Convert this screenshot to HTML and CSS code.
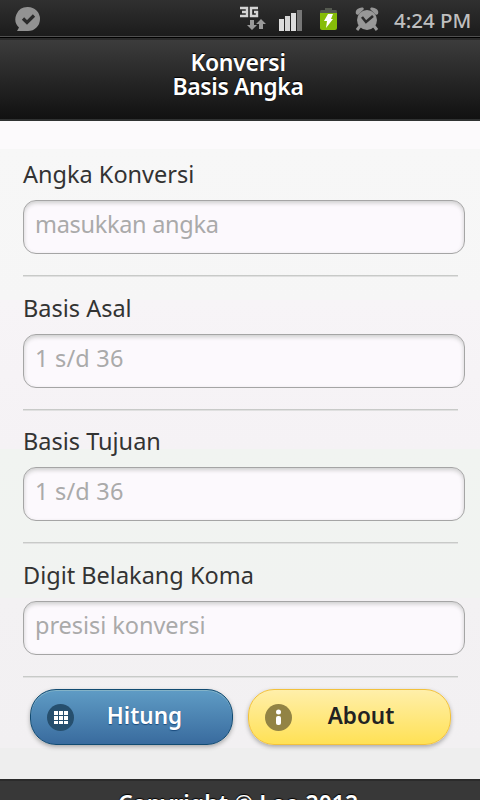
FILE: index.html
```html
<!DOCTYPE html>
<html lang="id">
<head>
<meta charset="utf-8">
<title>Konversi Basis Angka</title>
<link rel="stylesheet" href="styles.css">
</head>
<body>
<div class="status">
  <svg class="chat" width="26" height="26" viewBox="0 0 26 26"><path d="M13 1a12 12 0 1 1 0 24H2l2-3.500A12 12 0 0 1 13 1z" fill="#929292"/><path d="M8 12.500l4 4 7-7" fill="none" stroke="#2b2b2b" stroke-width="3.200"/></svg>
  <svg class="network" width="26" height="24" viewBox="0 0 26 24"><g fill="none" stroke="#d4d4d4" stroke-width="2.400"><path d="M0 2h7v8H0M2 6h5M18 2h-7v8h6V6h-3"/></g><g fill="#999"><path d="M10 14h4v5h3l-5 5-5-5h3zM19 23h4v-5h3l-5-5-5 5h3z"/></g></svg>
  <svg class="signal" width="24" height="22" viewBox="0 0 24 22"><path d="M0 10h5v12H0z" fill="#ddd"/><path d="M6 7h5v15H6z" fill="#d6d6d6"/><path d="M12 4h5v18h-5z" fill="#ddd"/><path d="M18 1h5v21h-5z" fill="#777"/></svg>
  <svg class="battery" width="18" height="24" viewBox="0 0 18 24"><path d="M5 1h7v2h4q1 0 1 2v2H0V5q0-2 1-2h4z" fill="#555a50"/><path d="M0 6h17v15q0 2-2 2H2q-2 0-2-2z" fill="#86bd08"/><path d="M8 7h5l-2 5h2l-7 9 1-7H4z" fill="#fff"/></svg>
  <svg class="alarm" width="24" height="26" viewBox="0 0 24 26"><g fill="#969696"><path d="M1 8Q0 5 2.500 3T8 1.500L9 3 3 9zM23 8q1-3-1.500-5T16 1.500L15 3l6 6z"/></g><path d="M5 20l-3 4M19 20l3 4" stroke="#969696" stroke-width="3"/><circle cx="12" cy="14" r="10" fill="#989898"/><path d="M7 11l4 5 7-6" fill="none" stroke="#2b2b2b" stroke-width="2.600"/></svg>
  <span class="time">4:24 PM</span>
</div>
<header class="header"><h1><span class="t1">Konversi</span><span class="t2">Basis Angka</span></h1></header>
<main class="content">
  <div class="field"><label class="l1" for="angka">Angka Konversi</label><input class="p1" id="angka" placeholder="masukkan angka"></div>
  <div class="field"><label class="l2" for="asal">Basis Asal</label><input class="p2" id="asal" placeholder="1 s/d 36"></div>
  <div class="field"><label class="l3" for="tujuan">Basis Tujuan</label><input class="p2" id="tujuan" placeholder="1 s/d 36"></div>
  <div class="field"><label class="l4" for="digit">Digit Belakang Koma</label><input class="p4" id="digit" placeholder="presisi konversi"></div>
  <div class="actions">
    <button class="btn blue"><svg width="27" height="27" viewBox="0 0 27 27"><circle cx="13.500" cy="13.500" r="13.500" fill="#264f6e"/><path d="M7 7h4v4H7zM12 7h4v4h-4zM17 7h4v4h-4zM7 12h4v4H7zM12 12h4v4h-4zM17 12h4v4h-4zM7 17h4v3H7zM12 17h4v3h-4zM17 17h4v3h-4z" fill="#fff"/></svg><span>Hitung</span></button>
    <button class="btn yellow"><svg width="27" height="27" viewBox="0 0 27 27"><circle cx="13.500" cy="13.500" r="13.500" fill="#928344"/><circle cx="13.500" cy="8" r="2.500" fill="#fff"/><rect x="11" y="12" width="5" height="9" rx="2" fill="#fff"/></svg><span>About</span></button>
  </div>
</main>
<footer class="footer">Copyright © Leo 2012</footer>
</body>
</html>
```
FILE: styles.css
```css
*, *::after { box-sizing: border-box; }
html { overflow: hidden; }
body {
  margin: 0;
  height: 800px;
  overflow: hidden;
  display: flex;
  flex-direction: column;
  font-family: "Noto Sans", "Open Sans", sans-serif;
  color: #333;
  background: #eee;
}
.status {
  height: 38px;
  flex: none;
  display: flex;
  align-items: flex-start;
  padding: 6px 0 0 15px;
  background: linear-gradient(#303030, #1b1b1b);
  border-bottom: 1px solid #000;
  box-shadow: inset 0 -1px #505050;
}
.status svg { flex: none; }
.network { margin-left: 199px; }
.signal { margin: 3px 0 0 13px; }
.battery { margin: 1px 0 0 17px; }
.alarm { margin-left: 17px; }
.time {
  margin-left: 15px;
  font-size: 20.500px;
  line-height: 28px;
  font-weight: 500;
  letter-spacing: 0;
  color: #bfbfbf;
  white-space: nowrap;
}
.header {
  height: 83px;
  flex: none;
  padding-top: 10px;
  text-align: center;
  color: #fff;
  background: linear-gradient(#3c3c3c, #111);
  border-top: 2px solid #2a2a2a;
  border-bottom: 2px solid #303232;
}
.header h1 {
  margin: 0;
  padding-right: 4px;
  font-size: 23px;
  line-height: 24px;
  font-weight: 600;
  text-shadow: 0 -1px 1px #000;
}
.t1, .t2 { display: block; }
.t1 { letter-spacing: -0.300px; }
.t2 { letter-spacing: -0.400px; }
.content {
  height: 658px;
  flex: none;
  padding: 38px 15px 0 23px;
  background: linear-gradient(#fcfafc 28px, #f7f7f7 28px, #f6f6f6 179px, #f7f4f7 179px, #f5f2f5 328px, #f1f4f1 328px, #f1f3f1 477px, #f3f1f3 477px, #f2f0f2 627px, #eee 627px);
}
.field {
  height: 133.500px;
  display: flex;
  flex-direction: column;
}
.field::after {
  content: "";
  height: 2px;
  margin: 21px 7px 0 0;
  border-top: 1px solid #c8cac8;
  border-bottom: 1px solid #e0e0e0;
}
label {
  height: 41px;
  font-size: 23.500px;
  line-height: 31px;
  white-space: nowrap;
}
input {
  width: 442px;
  height: 54px;
  padding: 0 11px 6px;
  border: 1px solid #a5a5a5;
  border-radius: 13px;
  outline: 0;
  font: 23.500px "Noto Sans", sans-serif;
  background: #fcf9fd;
  box-shadow: inset 0 2px 4px #ccc;
}
input::placeholder { color: #aaa; opacity: 1; }
.l1, .l2, .l3, .l4 { letter-spacing: 0; }
.p1 { letter-spacing: -0.300px; }
.p2 { letter-spacing: 0.200px; }
.p4 { letter-spacing: -0.050px; }
.actions {
  display: flex;
  gap: 15px;
  padding: 0 0 0 7px;
  margin-top: -4px;
}
.btn {
  width: 203px;
  height: 56px;
  padding: 0 0 0 16px;
  display: flex;
  align-items: center;
  border-radius: 26px;
  font: 600 22.500px "Noto Sans", sans-serif;
}
.btn span { flex: 1; padding: 0 17px 4px 0; }
.blue {
  color: #fff;
  border: 1px solid #124b72;
  background: linear-gradient(#5f9cc5, #396b9e);
  box-shadow: inset 0 1px #83b3c8, 0 2px 4px #aaa;
  text-shadow: 0 1px 1px #194b7e;
}
.yellow {
  color: #222;
  border: 1px solid #f2c13d;
  background: linear-gradient(#ffefaa, #ffe155);
  box-shadow: 0 2px 4px #aaa;
}
.yellow span { padding-right: 20px; }
.footer {
  height: 21px;
  flex: none;
  padding: 7px 4px 0 0;
  overflow: hidden;
  text-align: center;
  color: #fff;
  font-size: 23px;
  line-height: 30px;
  font-weight: 600;
  background: #383838;
  border-top: 2px solid #2b2b2b;
  text-shadow: 0 -1px 1px #000;
}
```
